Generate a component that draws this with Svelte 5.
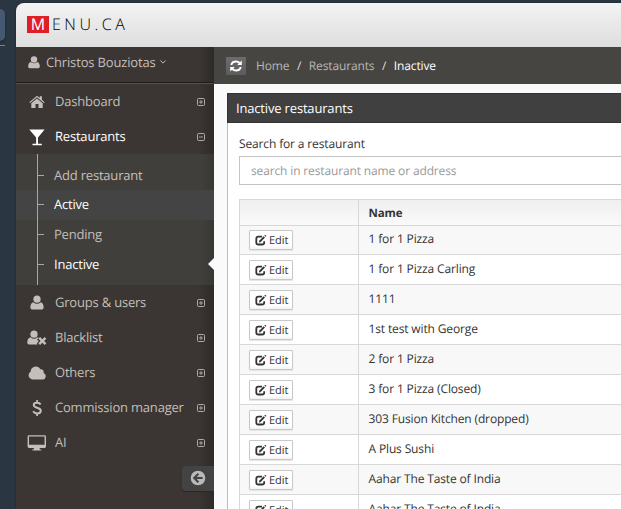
<script>
  const before = [{ label: 'Dashboard', icon: 'home' }];
  const after = [
    { label: 'Groups & users', icon: 'user' },
    { label: 'Blacklist', icon: 'ban' },
    { label: 'Others', icon: 'cloud' },
    { label: 'Commission manager', icon: 'dollar' },
    { label: 'AI', icon: 'screen' }
  ];
  const sub = [
    { label: 'Add restaurant' },
    { label: 'Active', on: true, hover: true },
    { label: 'Pending' },
    { label: 'Inactive', on: true, current: true }
  ];
  const rows = [
    '1 for 1 Pizza', '1 for 1 Pizza Carling', '1111', '1st test with George',
    '2 for 1 Pizza', '3 for 1 Pizza (Closed)', '303 Fusion Kitchen (dropped)',
    'A Plus Sushi', 'Aahar The Taste of India', 'Aahar The Taste of India'
  ];
</script>

{#snippet icon(name)}
  <svg class="ico" width="20" height="18" viewBox="0 0 20 18" fill="currentColor">
    {#if name === 'home'}
      <path d="M2.3 9.2 10 2.7l2.7 2.3V3.2h2.2v3.6l2.8 2.4-.8.9L10 4.3l-6.9 5.8z" />
      <path d="M10 5.4 4.3 10.2V15h4.2v-4h3v4h4.2v-4.8z" />
    {:else if name === 'glass'}
      <path d="M2.3 1.6h15.3L11 9.4V15.8h3.8v1.5H5.5v-1.5h3.6V9.4z" />
    {:else if name === 'user'}
      <circle cx="10" cy="5.2" r="3.6" />
      <path d="M6.3 8.2C4 8.7 3.4 11 3.4 13.5c0 1.4 1 2.1 2.2 2.1h8.8c1.2 0 2.2-.7 2.2-2.1 0-2.5-.6-4.8-2.9-5.3a5.2 5.2 0 0 1-7.4 0z" />
    {:else if name === 'ban'}
      <circle cx="7" cy="5.2" r="3.6" />
      <path d="M3.6 8.2C1 8.7.3 11 .3 13.5c0 1.4 1 2.1 2.2 2.1h7.9l-.5-1.3 1.8-2-1.6-1.8 1.6-1.7-1.2-.6a5.1 5.1 0 0 1-6.9 0z" />
      <path d="m12.2 8.8 6.3 6.3m0-6.3-6.3 6.3" stroke="currentColor" stroke-width="2.4" />
    {:else if name === 'cloud'}
      <path d="M5 15.4a4.1 4.1 0 0 1-1.4-7.6 5.3 5.3 0 0 1 9.9-2.6 3 3 0 0 1 3.2 3.7 3.4 3.4 0 0 1-.8 6.5z" />
    {:else if name === 'dollar'}
      <path fill="none" stroke="currentColor" stroke-width="2" d="M13.6 5.5C12.8 4 11.4 3.7 10 3.7c-1.9 0-3.3.9-3.3 2.4 0 1.6 1.5 2.1 3.4 2.7 2.2.6 3.7 1.2 3.7 3 0 1.6-1.5 2.6-3.6 2.6-2 0-3.3-.8-4-2.1" />
      <path d="M9.200 1h1.700v3H9.200zM9.200 14h1.700v3H9.200z" />
    {:else if name === 'screen'}
      <path fill-rule="evenodd" d="M2 1.300h15.600a1.400 1.400 0 0 1 1.400 1.400v9.900a1.400 1.400 0 0 1-1.400 1.400h-5l.3 1.600h1.300v1H5.400v-1h1.300L7 14H2a1.400 1.400 0 0 1-1.400-1.400V2.700A1.400 1.400 0 0 1 2 1.300zm0 1.100v8.400h15.600V2.400z" />
    {/if}
  </svg>
{/snippet}

{#snippet toggle(open)}
  <svg class="toggle" width="9" height="9" viewBox="0 0 9 9" fill="none" stroke="currentColor">
    <rect x=".5" y=".5" width="7" height="7" rx="1" stroke-width=".9" />
    <path d="M2 4h4" stroke-width=".8" />
    {#if !open}<path d="M4 2v4" stroke-width=".8" />{/if}
  </svg>
{/snippet}

<div class="desk">
  <div class="edge"><div class="tab"></div><div class="rule"></div></div>
  <div class="app">
    <header>
      <div class="logo"><b>M</b><span>ENU.CA</span></div>
    </header>
    <div class="body">
      <aside>
        <div class="who">
          <svg width="12" height="13" viewBox="3 1.500 14 14.500" fill="currentColor"><circle cx="10" cy="5.200" r="3.700" /><path d="M6.300 8.200C4 8.700 3.200 11 3.200 13.500c0 1.400 1 2.100 2.200 2.100h9.200c1.200 0 2.200-.7 2.200-2.100 0-2.500-.8-4.800-3.100-5.300a5.200 5.200 0 0 1-7.400 0z" /></svg>
          <span>Christos Bouziotas</span>
          <svg class="chev" width="6" height="4" viewBox="0 0 6 4" fill="none" stroke="currentColor"><path d="m.4.5 2.600 2.600L5.600.5" /></svg>
        </div>
        <nav>
          {#each before as item}
            <div class="item">{@render icon(item.icon)}<span>{item.label}</span>{@render toggle(false)}</div>
          {/each}
          <div class="item open">{@render icon('glass')}<span>Restaurants</span>{@render toggle(true)}</div>
          <div class="sub">
            {#each sub as s}
              <div class="leaf" class:on={s.on} class:hover={s.hover}>
                <span>{s.label}</span>{#if s.current}<i></i>{/if}
              </div>
            {/each}
          </div>
          {#each after as item}
            <div class="item">{@render icon(item.icon)}<span>{item.label}</span>{@render toggle(false)}</div>
          {/each}
        </nav>
        <div class="collapse">
          <svg width="16" height="16" viewBox="0 0 16 16"><circle cx="8" cy="8" r="7.300" fill="#b9b9b9" /><path d="M12.600 8H4.500M8.400 3.800 4.200 8l4.200 4.200" fill="none" stroke="#434343" stroke-width="2.100" /></svg>
        </div>
      </aside>
      <main>
        <div class="crumbs">
          <div class="refresh">
            <svg width="12" height="12" viewBox="0 0 12 12" fill="none" stroke="#fff" stroke-width="1.900"><path d="M1.300 5C1.700 2.900 3.600 1.500 6 1.500c1.500 0 2.700.5 3.600 1.500M10.700 7c-.4 2.100-2.300 3.500-4.700 3.500-1.500 0-2.700-.5-3.600-1.500" /><path stroke="none" fill="#fff" d="M11.800.5v4.600H7.200zM.2 11.500V6.900h4.600z" /></svg>
          </div>
          <span>Home</span><em>/</em><span>Restaurants</span><em>/</em><strong>Inactive</strong>
        </div>
        <section>
          <h2>Inactive restaurants</h2>
          <div class="panel">
            <label for="q">Search for a restaurant</label>
            <input id="q" placeholder="search in restaurant name or address" />
            <div class="table">
              <div class="row head"><div class="act"></div><div class="name">Name</div></div>
              {#each rows as r, n}
                <div class="row" class:odd={n % 2 === 0}>
                  <div class="act">
                    <button>
                      <svg width="12" height="11" viewBox="0 0 12 11" fill="none" stroke="#333"><path stroke-width="1.800" d="M7 1.600H3.400C2 1.600 1.300 2.400 1.300 3.700v3.700c0 1.300.7 2.100 2.100 2.100h3.700c1.400 0 2.100-.8 2.100-2.100V6.200" /><path stroke-width="1.900" d="m5 6.400 4.300-4.600" /><path stroke-width="1.800" d="m10 1.100.8-.8" /><path stroke="none" fill="#333" d="m4 7.500.4-2.200 1.700 1.700z" /></svg>
                      <span>Edit</span>
                    </button>
                  </div>
                  <div class="name">{r}</div>
                </div>
              {/each}
            </div>
          </div>
        </section>
      </main>
    </div>
  </div>
</div>

<style>
  * { box-sizing: border-box; }
  .desk { width: 621px; height: 509px; overflow: hidden; display: flex; background: #2b3643; font: 12px/18px "Open Sans", "Noto Sans", sans-serif; text-rendering: geometricPrecision; letter-spacing: -.14px; color: #333; white-space: nowrap; }
  .edge { width: 16px; flex: none; padding-top: 9px; }
  .tab { width: 5px; height: 32px; background: #465970; border-radius: 0 5px 5px 0; box-shadow: 0 1px 2px #1a222c; }
  .rule { width: 5px; height: 1px; margin-top: 4px; background: #78818b; }
  .app { flex: 1; min-width: 0; margin-top: 3px; display: flex; flex-direction: column; border-radius: 8px 0 0; overflow: hidden; box-shadow: 0 0 2px #17202a; }
  header { height: 44px; flex: none; background: linear-gradient(#f3f3f3, #dedede); padding: 13px 0 0 11px; }
  .logo { display: flex; height: 17px; color: #000; font-size: 16px; line-height: 17px; }
  .logo b { width: 22px; background: #de1f26; color: #fff; font-weight: 400; text-align: center; }
  .logo span { margin-left: 3px; letter-spacing: 3.500px; font-weight: 300; }
  .body { flex: 1; display: flex; min-height: 0; }
  aside { width: 198px; flex: none; background: linear-gradient(90deg, transparent 182px, rgba(0,0,0,.22)), #3b3633; color: #c4bfba; font-size: 13px; letter-spacing: -.2px; }
  .who { height: 37px; display: flex; align-items: center; padding: 0 0 5px 12px; border-bottom: 1px solid #544f4a; box-shadow: inset 0 -1px #1e1b19; }
  .who span { margin: -1px 4px 0 6px; letter-spacing: -.16px; }
  .chev { margin-top: -2px; }
  .item { height: 35px; display: flex; align-items: center; padding: 0 8px 0 11px; }
  .item span { flex: 1; margin: -2px 0 0 8px; }
  .open { color: #fff; }
  .ico, .toggle { flex: none; }
  .ico { margin-top: 1px; }
  .toggle { color: #bdb8b3; margin-top: 2px; }
  .sub { height: 131px; padding-top: 6px; background: linear-gradient(90deg, #aaa7a4, #aaa7a4) 21px 0 / 1px 100% no-repeat, linear-gradient(90deg, transparent 186px, rgba(0,0,0,.15)), #413f3c; }
  .leaf { height: 30px; display: flex; align-items: center; padding: 0 0 2px 22px; background: linear-gradient(#aaa7a4, #aaa7a4) 22px 14px / 6px 1px no-repeat; }
  .leaf:first-child { padding-bottom: 0; background-position: 22px 15px; }
  .leaf span { flex: 1; margin-left: 16px; }
  .on { color: #fff; }
  .hover { background: linear-gradient(#aaa7a4, #aaa7a4) 21px 0 / 1px 100% no-repeat, linear-gradient(#aaa7a4, #aaa7a4) 22px 14px / 6px 1px no-repeat, #444; }
  .leaf i { border: 6px solid transparent; border-left: 0; border-right: 6px solid #fafafa; }
  .collapse { width: 32px; height: 25px; margin: 6px 0 0 auto; padding: 4px 0 0 8px; background: #434343; border-radius: 4px 0 0 4px; box-shadow: 0 1px 1px #2a2624; }
  main { flex: 1; min-width: 0; background: #fafafa; }
  .crumbs { height: 37px; display: flex; align-items: center; padding-left: 12px; background: #474542; color: #b9b7b5; }
  .refresh { width: 20px; height: 18px; margin-right: 10px; display: grid; place-items: center; background: linear-gradient(#6c6c6c, #5c5c5c); border-radius: 1px; }
  .crumbs em { margin: 0 7.600px; font-style: normal; color: #ddd; }
  .crumbs strong { font-weight: 400; color: #fff; }
  section { margin: 9px 0 0 13px; }
  h2 { height: 30px; margin: 0; padding-left: 8px; background: #404040; border: 1px solid #333; border-width: 1px 0 1px 1px; color: #fff; font-size: 13px; line-height: 28px; font-weight: 400; letter-spacing: -.17px; }
  .panel { height: 400px; border-left: 1px solid #bbb; background: #fff; padding: 12px 0 0 11px; }
  label { display: block; height: 18px; }
  input { display: block; width: 500px; height: 29px; margin-top: 3px; padding: 0 11px; border: 1px solid #c4c4c4; font: inherit; text-rendering: inherit; letter-spacing: inherit; outline: 0; }
  input::placeholder { color: #999; opacity: 1; }
  .table { width: 500px; margin-top: 14px; border: 1px solid #d8d8d8; border-bottom: 0; }
  .row { display: flex; height: 30px; border-bottom: 1px solid #d8d8d8; }
  .row.head { height: 26px; background: linear-gradient(#efefef, #fafafa); font-weight: 700; font-size: 11.500px; }
  .head + .row { height: 29px; }
  .head + .row .act { padding-top: 4px; }
  .head + .row .name { padding-top: 4px; }
  .odd { background: #f8f8f8; }
  .act { width: 119px; flex: none; border-right: 1px solid #d8d8d8; padding: 5px 0 0 9px; }
  .name { padding: 5px 0 0 9.500px; }
  .head .name { padding-top: 5px; }
  button { width: 44px; height: 20px; display: flex; align-items: center; gap: 2px; padding: 0 0 0 5px; border: 1px solid #c8c8c8; border-radius: 1px; background: linear-gradient(#fff 80%, #f3f3f3); box-shadow: 0 1px 1px #e4e4e4; font: 11px/16px "Open Sans", sans-serif; text-rendering: inherit; color: #333; }
  button span { padding-top: 2px; }
</style>
